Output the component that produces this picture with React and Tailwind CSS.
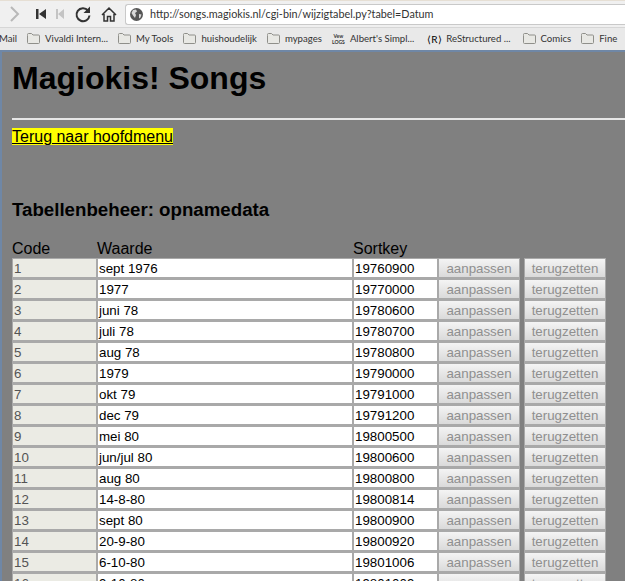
import React from "react";

const rows = [
  ["1", "sept 1976", "19760900"],
  ["2", "1977", "19770000"],
  ["3", "juni 78", "19780600"],
  ["4", "juli 78", "19780700"],
  ["5", "aug 78", "19780800"],
  ["6", "1979", "19790000"],
  ["7", "okt 79", "19791000"],
  ["8", "dec 79", "19791200"],
  ["9", "mei 80", "19800500"],
  ["10", "jun/jul 80", "19800600"],
  ["11", "aug 80", "19800800"],
  ["12", "14-8-80", "19800814"],
  ["13", "sept 80", "19800900"],
  ["14", "20-9-80", "19800920"],
  ["15", "6-10-80", "19801006"],
  ["16", "9-10-80", "19801009"],
];

function Folder() {
  return (
    <svg width="13" height="11" viewBox="0 0 13 11" className="shrink-0">
      <path d="M.5 2.500V1.500a1 1 0 0 1 1-1h3l1.500 1.500h5.500a1 1 0 0 1 1 1v6.500a1 1 0 0 1-1 1h-10a1 1 0 0 1-1-1z" fill="#e8e8e4" stroke="#8f8f8a" />
    </svg>
  );
}

function Bookmark({ label, icon, className = "" }) {
  return (
    <span className={`flex shrink-0 items-center gap-[5px] ${className}`}>
      {icon || <Folder />}
      {label}
    </span>
  );
}

function Cell({ children, className = "" }) {
  return (
    <div className={`h-[21px] border border-b-2 border-[#a9a9a9] pl-[1px] leading-[20px] text-[13.33px] ${className}`}>
      {children}
    </div>
  );
}

function Btn({ label }) {
  return (
    <div className="h-[21px] border border-b-2 border-[#a9a9a9] bg-gradient-to-b from-[#f4f4f4] to-[#dadada] text-center leading-[19px] text-[13.33px] text-[#8f8f8f]">
      {label}
    </div>
  );
}

export default function App() {
  return (
    <div className="h-[581px] w-[625px] overflow-hidden bg-[#808080] font-['Liberation_Sans',sans-serif] text-black">
      <div className="h-px bg-[#e6dfd4]" />
      <div className="flex h-[27px] items-center border-b border-[#d6d6d6] bg-[#f0f0f0] font-['Lato',sans-serif]">
        <svg width="125" height="26" viewBox="0 0 125 26" className="shrink-0">
          <path d="M11 6l7 7-7 7" fill="none" stroke="#b8b8b8" strokeWidth="2" />
          <path d="M36 8h2.500v10H36zM46 8v10l-7-5z" fill="#333" />
          <path d="M56 8h2v10h-2zM64 8v10l-6-5z" fill="#c4c4c4" />
          <path d="M88 9.500a6.500 6.500 0 1 0 1.500 5" fill="none" stroke="#333" strokeWidth="2" />
          <path d="M90 5.500v6.500h-6.500z" fill="#333" />
          <path d="M102 14l7-7 7 7M104 13v7h3.500v-4.500h3V20h3.500v-7" fill="none" stroke="#333" strokeWidth="1.500" />
        </svg>
        <div className="flex h-[21px] w-[500px] shrink-0 items-center gap-[7px] rounded-l-[3px] border border-r-0 border-[#c9c9c9] bg-white pl-[4px] text-[10.8px] text-[#333]">
          <svg width="13" height="13" viewBox="0 0 13 13" className="shrink-0">
            <circle cx="6.500" cy="6.500" r="6.500" fill="#555" />
            <path d="M3 2l3-.5 1 2-2 1.500 1 2-1 3-2-2.500-1.500-2.500zM9 6l2.500.5-1 3-1.500 1z" fill="#d8d8d8" />
          </svg>
          <span>http://songs.magiokis.nl/cgi-bin/wijzigtabel.py?tabel=Datum</span>
        </div>
      </div>
      <div className="flex h-[22px] items-center gap-[10px] whitespace-nowrap bg-[#e9e9e9] font-['Lato',sans-serif] text-[9.6px] text-[#333]">
        <span className="ml-[-1px] shrink-0">Mail</span>
        <Bookmark label="Vivaldi Intern..." />
        <Bookmark label="My Tools" />
        <Bookmark label="huishoudelijk" />
        <Bookmark label="mypages" />
        <Bookmark
          label="Albert's Simpl..."
          icon={<span className="w-[13px] whitespace-normal text-center text-[5px] font-bold leading-[6px]">Vew LOGS</span>}
        />
        <Bookmark
          className="ml-[3px]"
          label="ReStructured ..."
          icon={<span className="w-[14px] text-center text-[10px] leading-none text-black">⟨R⟩</span>}
        />
        <Bookmark className="ml-[2px]" label="Comics" />
        <Bookmark label="Fine" />
      </div>
      <div className="h-[531px] border-l-[2px] border-t-[2px] border-[#6f87a6] pl-[10px]">
        <h1 className="pt-[8px] text-[32px] font-bold leading-[37px]">Magiokis! Songs</h1>
        <hr className="mt-[21px] border-t-2 border-[#e6e6e6]" />
        <div className="mt-[8px] leading-[18px]">
          <a className="bg-[#ffff00] text-[16px] underline">Terug naar hoofdmenu</a>
        </div>
        <h3 className="mt-[53px] text-[18.7px] font-bold leading-[22px]">Tabellenbeheer: opnamedata</h3>
        <div className="mt-[19px] grid grid-cols-[85px_256px_85px_82px_4px_82px] text-[16px] leading-[18px]">
          <span>Code</span>
          <span>Waarde</span>
          <span className="col-span-4">Sortkey</span>
        </div>
        <div className="grid grid-cols-[85px_256px_85px_82px_4px_82px]">
          {rows.map(([code, value, key]) => (
            <React.Fragment key={code}>
              <Cell className="bg-[#ebebe4] text-[#545454]">{code}</Cell>
              <Cell className="bg-white">{value}</Cell>
              <Cell className="bg-white">{key}</Cell>
              <Btn label="aanpassen" />
              <span />
              <Btn label="terugzetten" />
            </React.Fragment>
          ))}
        </div>
      </div>
    </div>
  );
}
